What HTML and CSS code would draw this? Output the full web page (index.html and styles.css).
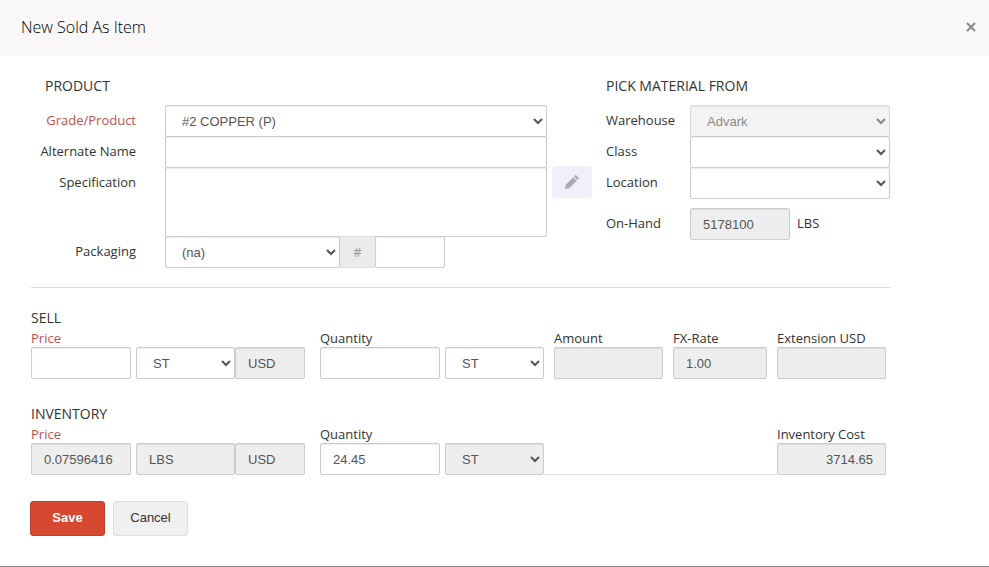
FILE: index.html
```
<!DOCTYPE html>
<html lang="en">
<head>
    <meta charset="UTF-8">
    <meta name="viewport" content="width=device-width, initial-scale=1.0">
    <title>New Sold As Item</title>
    <link rel="stylesheet" href="styles.css">
</head>
<body>

    <form class="modal">
        <div class="modal-header">
            <h1>New Sold As Item</h1>
            <button type="button" class="close" aria-label="Close">
                <svg width="10" height="10" viewBox="0 0 10 10"><path d="M1 1l8 8M9 1l-8 8"/></svg>
            </button>
        </div>

        <div class="modal-body">
            <div class="top">
                <div class="product">
                    <h2>PRODUCT</h2>
                    <div class="row">
                        <label class="required" for="grade">Grade/Product</label>
                        <select id="grade"><option>#2 COPPER (P)</option></select>
                    </div>
                    <div class="row">
                        <label for="altName">Alternate Name</label>
                        <input type="text" id="altName">
                    </div>
                    <div class="row">
                        <label for="spec">Specification</label>
                        <textarea id="spec"></textarea>
                        <button type="button" class="edit" aria-label="Edit specification">
                            <svg width="14" height="14" viewBox="0 0 14 14"><path d="M0 14l1-4.5L8.2 2.3l3.5 3.5L4.5 13zM9 1.5l1.2-1.2q.5-.5 1 0l2.5 2.5q.5.5 0 1L12.500 5z"/></svg>
                        </button>
                    </div>
                    <div class="row">
                        <label for="packaging">Packaging</label>
                        <div class="packaging">
                            <select id="packaging"><option>(na)</option></select>
                            <label class="addon" for="packCount">#</label>
                            <input type="text" id="packCount">
                        </div>
                    </div>
                </div>

                <div class="material">
                    <h2>PICK MATERIAL FROM</h2>
                    <div class="row">
                        <label for="warehouse">Warehouse</label>
                        <select id="warehouse" disabled><option>Advark</option></select>
                    </div>
                    <div class="row">
                        <label for="class">Class</label>
                        <select id="class"><option></option></select>
                    </div>
                    <div class="row">
                        <label for="location">Location</label>
                        <select id="location"><option></option></select>
                    </div>
                    <div class="row on-hand">
                        <label for="onHand">On-Hand</label>
                        <input type="text" id="onHand" value="5178100" readonly>
                        <span class="unit">LBS</span>
                    </div>
                </div>
            </div>

            <hr>

            <h2>SELL</h2>
            <div class="line">
                <div class="group price">
                    <label class="required" for="sellPrice">Price</label>
                    <div class="fields">
                        <input type="text" id="sellPrice" class="amount">
                        <select class="uom" aria-label="Price unit"><option>ST</option></select>
                        <input type="text" class="currency" value="USD" aria-label="Currency" readonly>
                    </div>
                </div>
                <div class="group quantity">
                    <label for="sellQty">Quantity</label>
                    <div class="fields">
                        <input type="text" id="sellQty" class="amount">
                        <select class="uom" aria-label="Quantity unit"><option>ST</option></select>
                    </div>
                </div>
                <div class="group total">
                    <label for="amount">Amount</label>
                    <input type="text" id="amount" readonly>
                </div>
                <div class="group fx">
                    <label for="fxRate">FX-Rate</label>
                    <input type="text" id="fxRate" value="1.00" readonly>
                </div>
                <div class="group total">
                    <label for="extension">Extension USD</label>
                    <input type="text" id="extension" readonly>
                </div>
            </div>

            <h2>INVENTORY</h2>
            <div class="line">
                <div class="group price">
                    <label class="required" for="invPrice">Price</label>
                    <div class="fields">
                        <input type="text" id="invPrice" class="amount" value="0.07596416" readonly>
                        <input type="text" class="uom" value="LBS" aria-label="Price unit" readonly>
                        <input type="text" class="currency" value="USD" aria-label="Currency" readonly>
                    </div>
                </div>
                <div class="group quantity">
                    <label for="invQty">Quantity</label>
                    <div class="fields">
                        <input type="text" id="invQty" class="amount" value="24.45">
                        <select class="uom locked" aria-label="Quantity unit"><option>ST</option></select>
                    </div>
                </div>
                <div class="spacer"></div>
                <div class="group total">
                    <label for="invCost">Inventory Cost</label>
                    <input type="text" id="invCost" class="right" value="3714.65" readonly>
                </div>
            </div>
        </div>

        <div class="modal-footer">
            <button type="submit" class="btn btn-save">Save</button>
            <button type="button" class="btn">Cancel</button>
        </div>
    </form>

</body>
</html>
```

FILE: styles.css
```
* {
    box-sizing: border-box;
}
body {
    margin: 0;
    background-color: #fff;
    color: #333;
    font-family: "Open Sans", sans-serif;
    font-size: 13px;
    line-height: 20px;
}
.modal {
    min-height: 100vh;
    border-bottom: 1px solid #888;
}
.modal-header {
    display: flex;
    justify-content: space-between;
    align-items: center;
    height: 56px;
    padding: 0 13px 3px 21px;
    background-color: #f9f7f8;
}
.modal-header h1 {
    margin: 0;
    font-size: 16px;
    font-weight: 300;
    color: #000;
}
.close {
    display: flex;
    padding: 0;
    border: none;
    background: none;
    cursor: pointer;
}
.close svg {
    fill: none;
    stroke: #888;
    stroke-width: 2;
}
.modal-body {
    padding: 20px 98px 0 31px;
}
h2 {
    margin: 0;
    font-size: 14px;
    font-weight: 400;
    line-height: 20px;
}
.required {
    color: #c0504d;
}

/* form controls */
input, select, textarea {
    display: block;
    width: 100%;
    min-width: 0;
    height: 32px;
    margin: 0;
    padding: 4px 12px;
    border: 1px solid #ccc;
    border-radius: 2px;
    background-color: #fff;
    box-shadow: inset 0 1px 1px rgba(0, 0, 0, 0.08);
    color: #555;
    font-family: "Liberation Sans", Arial, sans-serif;
    font-size: 13px;
}
textarea {
    height: 70px;
    resize: none;
}
input:read-only, .locked {
    background-color: #eee;
}
select:disabled {
    background-color: #eee;
    opacity: 0.7;
}
.right {
    text-align: right;
}

/* product and material */
.top {
    display: flex;
    gap: 59px;
    padding-right: 1px;
}
.product {
    flex: 1;
}
.product h2 {
    padding-left: 14px;
}
.material {
    width: 284px;
}
.top h2 {
    margin-bottom: 9px;
}
.row {
    display: flex;
    position: relative;
}
.row + .row {
    margin-top: -1px;
}
.row > label {
    flex: none;
    width: 84px;
    padding-top: 5px;
}
.product .row > label {
    width: 105px;
    margin-right: 29px;
    text-align: right;
}
.edit {
    position: absolute;
    left: 100%;
    top: -1px;
    display: flex;
    justify-content: center;
    align-items: center;
    width: 40px;
    height: 32px;
    margin-left: 5px;
    border: none;
    border-radius: 4px;
    background-color: #f0f0fa;
    cursor: pointer;
}
.edit svg {
    fill: #aaa;
}
.packaging {
    display: flex;
    width: 280px;
}
.packaging select {
    width: 175px;
}
.packaging input {
    width: 70px;
}
.addon {
    width: 35px;
    padding: 6px 0;
    border: 1px solid #ddd;
    border-width: 1px 0;
    background-color: #ebebeb;
    color: #999;
    line-height: 18px;
    text-align: center;
}
.material .on-hand {
    margin-top: 9px;
}
.on-hand input {
    width: 100px;
}
.unit {
    padding: 5px 0 0 7px;
}
hr {
    margin: 19px 0 20px;
    border: none;
    border-top: 1px solid #ddd;
}

/* sell and inventory lines */
.line {
    display: flex;
    gap: 10px;
    padding-right: 5px;
}
.line + h2 {
    margin-top: 25px;
}
.group > label {
    display: block;
    height: 19px;
}
.fields {
    display: flex;
}
.price {
    flex: 274 1 274px;
    margin-right: 5px;
}
.quantity {
    flex: 224 1 224px;
}
.total {
    flex: 109 1 109px;
}
.fx {
    flex: 94 1 94px;
}
.fields .amount {
    flex: 100 1 100px;
    margin-right: 5px;
}
.quantity .amount {
    flex: 120 1 120px;
}
.fields .uom {
    flex: 99 1 99px;
}
.fields .currency {
    flex: 70 1 70px;
}
/* rule joining the quantity to the cost */
.spacer {
    flex: 233 1 233px;
    margin: 0 -10px;
    border-bottom: 1px solid #ddd;
}

.modal-footer {
    display: flex;
    gap: 8px;
    padding: 26px 30px 30px;
}
.btn {
    width: 75px;
    height: 35px;
    padding: 0 0 2px;
    border: 1px solid #ddd;
    border-radius: 3px;
    background-color: #f0f0f0;
    color: #333;
    font-family: "Liberation Sans", Arial, sans-serif;
    font-size: 13px;
    cursor: pointer;
}
.btn-save {
    border-color: #c43c26;
    background-color: #d64830;
    color: #fff;
    font-weight: bold;
}
```
